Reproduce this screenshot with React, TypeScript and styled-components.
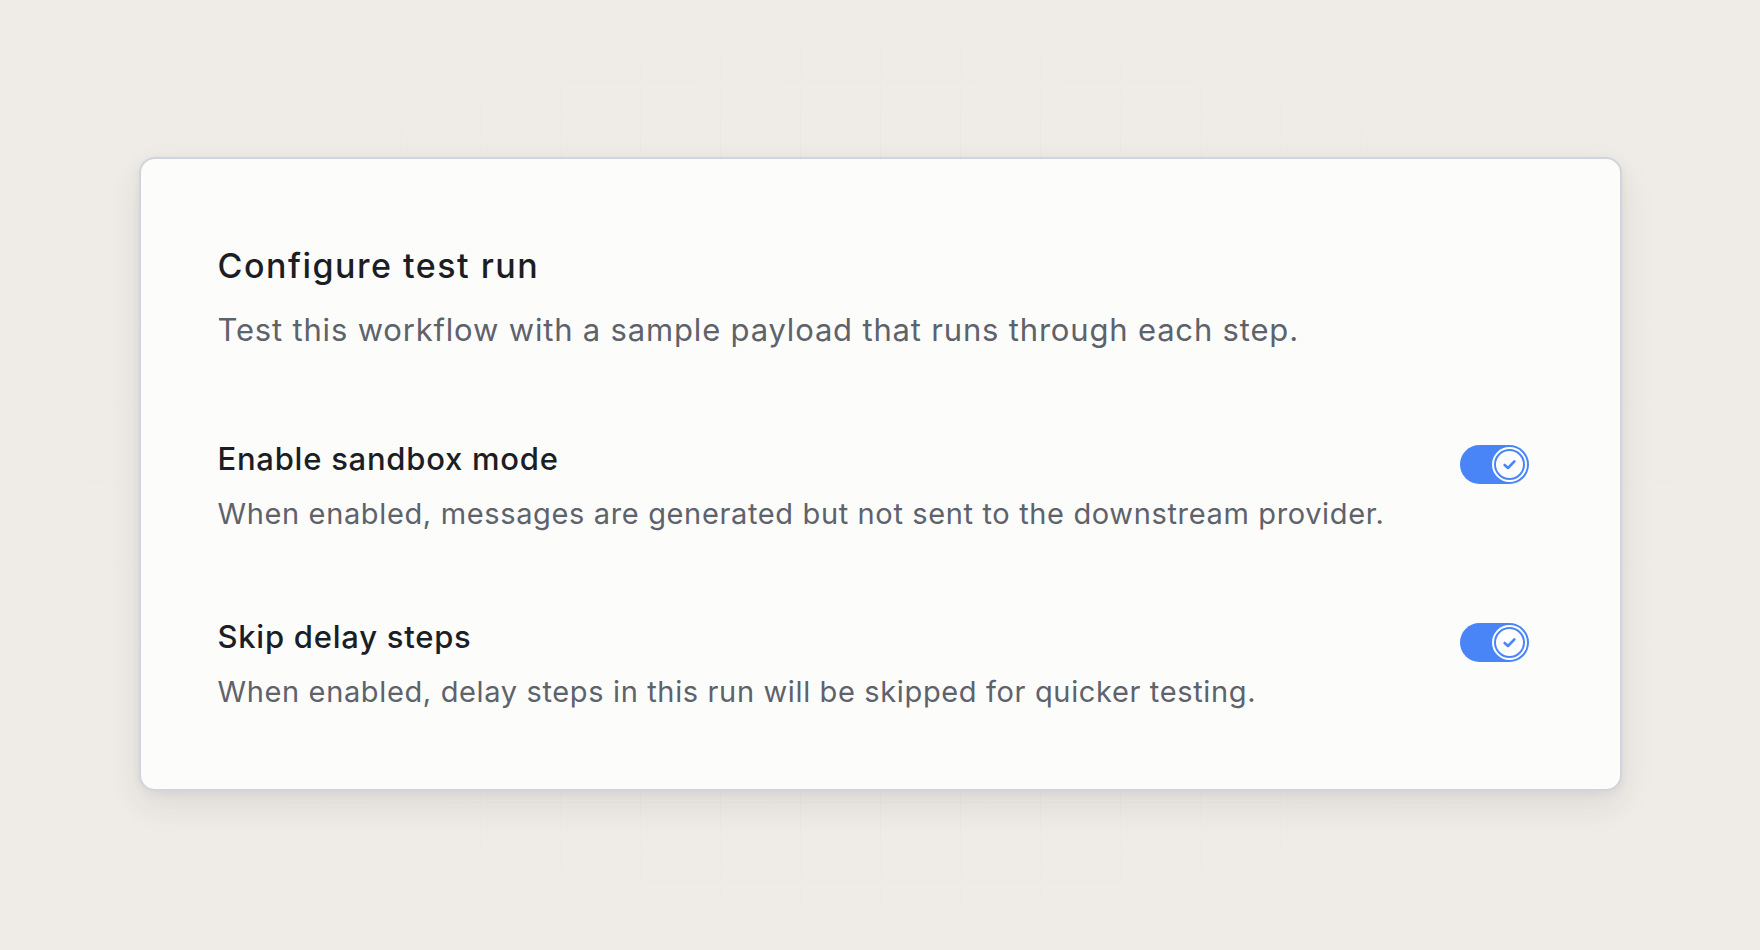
import styled, { createGlobalStyle } from 'styled-components'

const GlobalStyle = createGlobalStyle`
  html, body {
    margin: 0;
    padding: 0;
    height: 100%;
  }
  body {
    background: #efece8;
    font-family: Inter, "Noto Sans", sans-serif;
    -webkit-font-smoothing: antialiased;
  }
  #root {
    height: 100%;
  }
`

const Page = styled.main`
  position: relative;
  width: 1760px;
  height: 950px;
  display: flex;
  justify-content: center;
  padding-top: 157px;
  box-sizing: border-box;
  overflow: hidden;

  /* faint grid that fades out towards the edges */
  &::before {
    content: "";
    position: absolute;
    inset: 0;
    background-image:
      linear-gradient(to right, rgba(60, 50, 40, 0.035) 1px, transparent 1px),
      linear-gradient(to bottom, rgba(60, 50, 40, 0.035) 1px, transparent 1px);
    background-size: 80px 80px;
    background-position: 0 2px;
    -webkit-mask-image: radial-gradient(ellipse 50% 50% at 50% 50%, #000 40%, transparent 100%);
    mask-image: radial-gradient(ellipse 50% 50% at 50% 50%, #000 40%, transparent 100%);
    pointer-events: none;
  }
`

const Card = styled.section`
  position: relative;
  width: 1483px;
  height: 634px;
  box-sizing: border-box;
  background: #fcfcfb;
  border: 2px solid #d0d4dd;
  border-radius: 16px;
  box-shadow: 0 14px 34px rgba(40, 35, 30, 0.09), 0 3px 8px rgba(40, 35, 30, 0.05);
  padding: 87px 91px 0 77px;
  display: flex;
  flex-direction: column;
`

const Header = styled.header`
  display: flex;
  flex-direction: column;
  gap: 26px;
  margin-bottom: 93px;
`

const Title = styled.h1`
  margin: 0;
  font-size: 34px;
  line-height: 40px;
  font-weight: 500;
  color: #1b1e24;
  letter-spacing: 1.5px;
`

const Subtitle = styled.p`
  margin: 0;
  font-size: 31px;
  line-height: 36px;
  font-weight: 400;
  color: #5e626b;
  letter-spacing: 0.82px;
`

const Rows = styled.div`
  display: flex;
  flex-direction: column;
  gap: 87px;
`

const Row = styled.div`
  display: flex;
  align-items: flex-start;
  justify-content: space-between;
`

const RowText = styled.div`
  display: flex;
  flex-direction: column;
  gap: 19px;
`

const Label = styled.div`
  font-size: 31px;
  line-height: 36px;
  font-weight: 500;
  color: #1b1e24;
  letter-spacing: 0.75px;
`

const Description = styled.div`
  font-size: 29px;
  line-height: 36px;
  color: #5e626b;
  letter-spacing: 0.64px;
`

const Track = styled.button<{ $on: boolean }>`
  flex: none;
  margin-top: 4px;
  width: 69px;
  height: 39px;
  border: none;
  border-radius: 999px;
  padding: 2px;
  background: ${p => (p.$on ? '#4a85f7' : '#d4d6dc')};
  display: flex;
  justify-content: ${p => (p.$on ? 'flex-end' : 'flex-start')};
  align-items: center;
  cursor: pointer;
`

const Knob = styled.span`
  width: 35px;
  height: 35px;
  border-radius: 50%;
  background: #fff;
  display: flex;
  align-items: center;
  justify-content: center;
`

const Ring = styled.span`
  width: 31px;
  height: 31px;
  box-sizing: border-box;
  border-radius: 50%;
  border: 2px solid #4a85f7;
  display: flex;
  align-items: center;
  justify-content: center;
`

const Toggle = ({ on }: { on: boolean }) => (
  <Track $on={on} aria-pressed={on}>
    <Knob>
      <Ring>
        <svg width="15" height="15" viewBox="0 0 15 15" fill="none">
          <path d="M2.6 8 L6 11 L12.4 4.4" stroke="#4a85f7" strokeWidth="2.6" strokeLinecap="round" strokeLinejoin="round" />
        </svg>
      </Ring>
    </Knob>
  </Track>
)

const settings = [
  {
    label: 'Enable sandbox mode',
    text: 'When enabled, messages are generated but not sent to the downstream provider.',
  },
  {
    label: 'Skip delay steps',
    text: 'When enabled, delay steps in this run will be skipped for quicker testing.',
  },
]

const App = () => {
  return (
    <>
      <GlobalStyle />
      <Page>
        <Card>
          <Header>
            <Title>Configure test run</Title>
            <Subtitle>Test this workflow with a sample payload that runs through each step.</Subtitle>
          </Header>
          <Rows>
            {settings.map(s => (
              <Row key={s.label}>
                <RowText>
                  <Label>{s.label}</Label>
                  <Description>{s.text}</Description>
                </RowText>
                <Toggle on />
              </Row>
            ))}
          </Rows>
        </Card>
      </Page>
    </>
  )
}

export default App
